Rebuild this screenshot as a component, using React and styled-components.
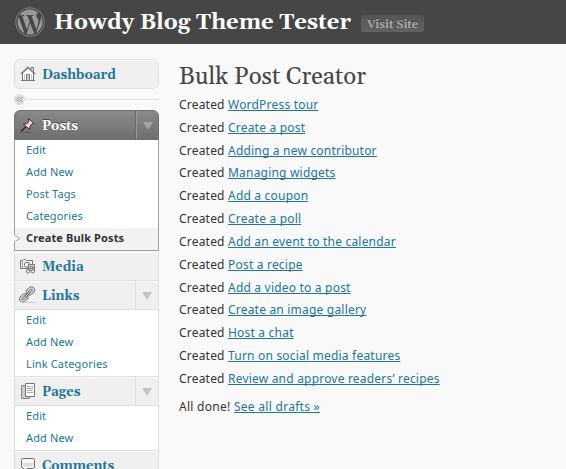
import React from 'react';
import styled, { createGlobalStyle, css } from 'styled-components';
import { FaWordpress } from 'react-icons/fa';

const serif = '"Gelasio", Georgia, "Liberation Serif", serif';
const sans = '"Noto Sans", "Open Sans", sans-serif';

const GlobalStyle = createGlobalStyle`
  * { box-sizing: border-box; }
  html, body { margin: 0; height: 469px; overflow: hidden; background: #f9f9f9; }
  body { font-family: ${sans}; color: #333; }
  ul { list-style: none; margin: 0; padding: 0; }
`;

const Page = styled.div`
  height: 469px;
  overflow: hidden;
`;

const Header = styled.header`
  display: flex;
  align-items: center;
  height: 44px;
  padding-left: 15px;
  background: #464646;
`;

const Logo = styled(FaWordpress)`
  width: 30px;
  height: 30px;
  color: #999;
`;

const SiteTitle = styled.h1`
  margin: 0 0 0 9px;
  padding-top: 2px;
  width: 298px;
  font: bold 22px/44px ${serif};
  white-space: nowrap;
  color: #fff;
`;

const VisitSite = styled.a`
  margin: 3px 0 0 9px;
  width: 63px;
  height: 17px;
  border-radius: 3px;
  background: linear-gradient(#555, #626262);
  color: #aaa;
  font: bold 11px/20px ${serif};
  letter-spacing: 0.05px;
  text-align: center;
  text-shadow: 0 -1px 0 #3f3f3f;
  white-space: nowrap;
`;

const Body = styled.div`
  display: flex;
  align-items: flex-start;
`;

const Sidebar = styled.nav`
  flex: none;
  width: 145px;
  margin: 15px 0 0 14px;
`;

const IconSlot = styled.span`
  display: flex;
  flex: none;
  width: 27px;
  padding-left: 4px;
`;

const Label = styled.span`
  flex: 1;
  padding-top: 2px;
  font: bold 13px/18px ${serif};
`;

const Toggle = styled.span`
  display: flex;
  align-items: center;
  justify-content: center;
  align-self: stretch;
  width: ${(p) => (p.$active ? 22 : 23)}px;
  border-left: 1px solid ${(p) => (p.$active ? '#999' : '#dfdfdf')};
  color: ${(p) => (p.$active ? '#a3a3a3' : '#c4c4c4')};
  ${(p) => p.$active && 'box-shadow: -1px 0 #686868;'}

  svg { margin-top: 2px; }
`;

const Heading = styled.div`
  display: flex;
  align-items: center;
  height: 29px;
  color: #21759b;
  background: #f0f0f0;
  border: solid #dfdfdf;
  border-width: 0 1px 1px;
  box-shadow: inset 0 1px #fff;

  ${(p) => p.$boxed && css`
    height: 30px;
    border-width: 1px;
    border-radius: 6px;
  `}
  ${(p) => p.$active && css`
    height: 30px;
    color: #fff;
    background: linear-gradient(#898989, #6f6f6f);
    border: 1px solid #6f6f6f;
    border-radius: 6px 6px 0 0;
    box-shadow: none;
    text-shadow: 0 -1px 0 #444;
  `}
`;

const Separator = styled.div`
  display: flex;
  align-items: center;
  height: 11px;
  margin: 5px 0;

  &::after {
    content: '';
    flex: 1;
    height: 1px;
    background: #e1e1e1;
  }
`;

const Submenu = styled.ul`
  background: #fff;
  border: solid ${(p) => (p.$active ? '#a0a0a0' : '#dfdfdf')};
  border-width: 0 1px 1px;
  ${(p) => p.$active && 'margin-bottom: 1px;'}
`;

const SubItem = styled.li`
  display: flex;
  position: relative;
  height: 22px;
  padding-left: 11px;
  font-size: 11px;
  line-height: 20px;
  letter-spacing: 0.13px;
  white-space: nowrap;
  color: #21759b;

  ${(p) => p.$current && css`
    background: #f2f2f2;
    color: #333;
    font-weight: 700;
  `}
`;

const Notch = styled.svg`
  position: absolute;
  left: -1px;
  top: 6px;
`;

const Main = styled.main`
  margin: 18px 0 0 20px;
`;

const PageTitle = styled.h2`
  margin: 0;
  height: 35px;
  font: 24px/30px ${serif};
  color: #464646;
  white-space: nowrap;
`;

const Entry = styled.p`
  margin: 0 0 6px;
  font-size: 12px;
  line-height: 16.83px;
  letter-spacing: 0.2px;
  white-space: nowrap;
  ${(p) => p.$final && 'margin-top: 11px; letter-spacing: 0.28px;'}
`;

const Link = styled.a`
  color: #21759b;
  text-decoration: underline;
  text-decoration-skip-ink: none;
  text-decoration-thickness: 1px;
  text-underline-offset: 1px;
`;

const Icon = ({ children }) => (
  <svg width="18" height="18" viewBox="0 0 18 18" fill="none" stroke="#777" strokeWidth="1">{children}</svg>
);

const HomeIcon = () => (
  <Icon>
    <path d="M3.5 8v7.5h11V8L9 3z" fill="#f8f8f8" />
    <path d="M12.5 4V2.5h2v4" fill="#ddd" />
    <path d="M1.8 9 9 2.200l7.200 6.800" stroke="#808080" strokeWidth="1.400" />
    <path d="M7.500 15V9.500h3V15" fill="#ccc" />
    <path d="M5.500 9v6M12.500 9v6" stroke="#ccc" />
    <path d="M2 15.500h14" />
  </Icon>
);

const PinIcon = () => (
  <Icon>
    <path d="M1 16.500h11" stroke="#604f4c" opacity=".6" />
    <path d="M2 15.500 7 10.500" stroke="#3a2522" strokeWidth="1.500" />
    <path d="M9.300 2.500 15 7.300l-2.200.7-1.700 2.200-.5 3.200-6-5.200 3.300-.5 2-2z" fill="#efcfcb" stroke="#4b302c" />
    <path d="m10.500 5 2.500 2M7 8.500l3 2.500" stroke="#fff3f0" />
  </Icon>
);

const MediaIcon = () => (
  <Icon>
    <path d="M1.500 3.500h2l1-1h2l1 1h6v8h-12z" fill="#eee" />
    <rect x="5.500" y="5.500" width="5" height="4.500" rx="1.500" fill="#fff" />
    <path d="M3.500 4v7" stroke="#aaa" />
    <path d="M9.500 14V7.500h6V14h-1.500V9.500h-3V14" fill="#ddd" />
    <circle cx="9" cy="14.300" r="1.700" fill="#e8e8e8" />
    <circle cx="13.800" cy="14.300" r="1.700" fill="#e8e8e8" />
  </Icon>
);

const LinkIcon = () => (
  <Icon>
    <path d="M6 16.500h11" stroke="#ccc" />
    <g strokeWidth="3.200" stroke="#777">
      <rect x="8" y="3" width="6.800" height="4" rx="2" transform="rotate(-42 11.400 5)" />
      <rect x="1.400" y="10" width="6.800" height="4" rx="2" transform="rotate(-42 4.800 12)" />
    </g>
    <g strokeWidth="1.400" stroke="#dedede">
      <rect x="8" y="3" width="6.800" height="4" rx="2" transform="rotate(-42 11.400 5)" />
      <rect x="1.400" y="10" width="6.800" height="4" rx="2" transform="rotate(-42 4.800 12)" />
    </g>
    <path d="m6 11 4.500-4.500" stroke="#666" strokeWidth="2.600" />
    <path d="m6 11 4.500-4.500" stroke="#ddd" />
  </Icon>
);

const PagesIcon = () => (
  <Icon>
    <path d="M2.500 3.500h8v13h-8z" fill="#ccc" stroke="#888" />
    <path d="M6.500 1.500h9v13h-9z" fill="#fff" />
    <path d="M8 4.500h3M8 6.500h6M8 8.500h6M8 10.500h6M12 4.500h2" stroke="#aaa" />
  </Icon>
);

const CommentIcon = () => (
  <Icon>
    <path d="M4.500 2.500h9q2 0 2 2v6q0 2-2 2H8l-3 3v-3h-.5q-2 0-2-2v-6q0-2 2-2z" fill="#f5f5f5" stroke="#6c6c6c" />
    <path d="M4 7h10v3.500H4z" fill="#ddd" stroke="none" />
  </Icon>
);

const Collapse = () => (
  <svg width="11" height="11" viewBox="0 0 11 11">
    <circle cx="5.500" cy="5.500" r="5.500" fill="#dfdfdf" />
    <path d="M5.300 3 2.800 5.500 5.300 8M8.300 3 5.800 5.500 8.300 8" fill="none" stroke="#8c8c8c" />
  </svg>
);

const menu = [
  { label: 'Posts', icon: PinIcon, active: true, items: ['Edit', 'Add New', 'Post Tags', 'Categories', 'Create Bulk Posts'] },
  { label: 'Media', icon: MediaIcon },
  { label: 'Links', icon: LinkIcon, items: ['Edit', 'Add New', 'Link Categories'] },
  { label: 'Pages', icon: PagesIcon, items: ['Edit', 'Add New'] },
  { label: 'Comments', icon: CommentIcon },
];

const created = [
  'WordPress tour',
  'Create a post',
  'Adding a new contributor',
  'Managing widgets',
  'Add a coupon',
  'Create a poll',
  'Add an event to the calendar',
  'Post a recipe',
  'Add a video to a post',
  'Create an image gallery',
  'Host a chat',
  'Turn on social media features',
  'Review and approve readers’ recipes',
];

function MenuHeading({ label, icon: Glyph, active, boxed, toggle }) {
  return (
    <Heading $active={active} $boxed={boxed}>
      <IconSlot><Glyph /></IconSlot>
      <Label>{label}</Label>
      {toggle && (
        <Toggle $active={active}>
          <svg width="10" height="8" viewBox="0 0 10 8"><path d="M0 0h10L5 8z" fill="currentColor" /></svg>
        </Toggle>
      )}
    </Heading>
  );
}

export default function App() {
  return (
    <Page>
      <GlobalStyle />
      <Header>
        <Logo />
        <SiteTitle>Howdy Blog Theme Tester</SiteTitle>
        <VisitSite>Visit Site</VisitSite>
      </Header>
      <Body>
        <Sidebar>
          <MenuHeading label="Dashboard" icon={HomeIcon} boxed />
          <Separator><Collapse /></Separator>
          {menu.map(({ items, ...entry }) => (
            <React.Fragment key={entry.label}>
              <MenuHeading {...entry} toggle={!!items} />
              {items && (
                <Submenu $active={entry.active}>
                  {items.map((item) => {
                    const current = item === 'Create Bulk Posts';
                    return (
                      <SubItem key={item} $current={current}>
                        {current && (
                          <Notch width="7" height="9" viewBox="0 0 7 9">
                            <path d="M0 1v7l6-3.500z" fill="#f9f9f9" />
                            <path d="M.5 1.200 6 4.500.5 7.800" fill="none" stroke="#aaa" />
                          </Notch>
                        )}
                        {item}
                      </SubItem>
                    );
                  })}
                </Submenu>
              )}
            </React.Fragment>
          ))}
        </Sidebar>
        <Main>
          <PageTitle>Bulk Post Creator</PageTitle>
          {created.map((title) => (
            <Entry key={title}>Created <Link>{title}</Link></Entry>
          ))}
          <Entry $final>All done! <Link>See all drafts »</Link></Entry>
        </Main>
      </Body>
    </Page>
  );
}
